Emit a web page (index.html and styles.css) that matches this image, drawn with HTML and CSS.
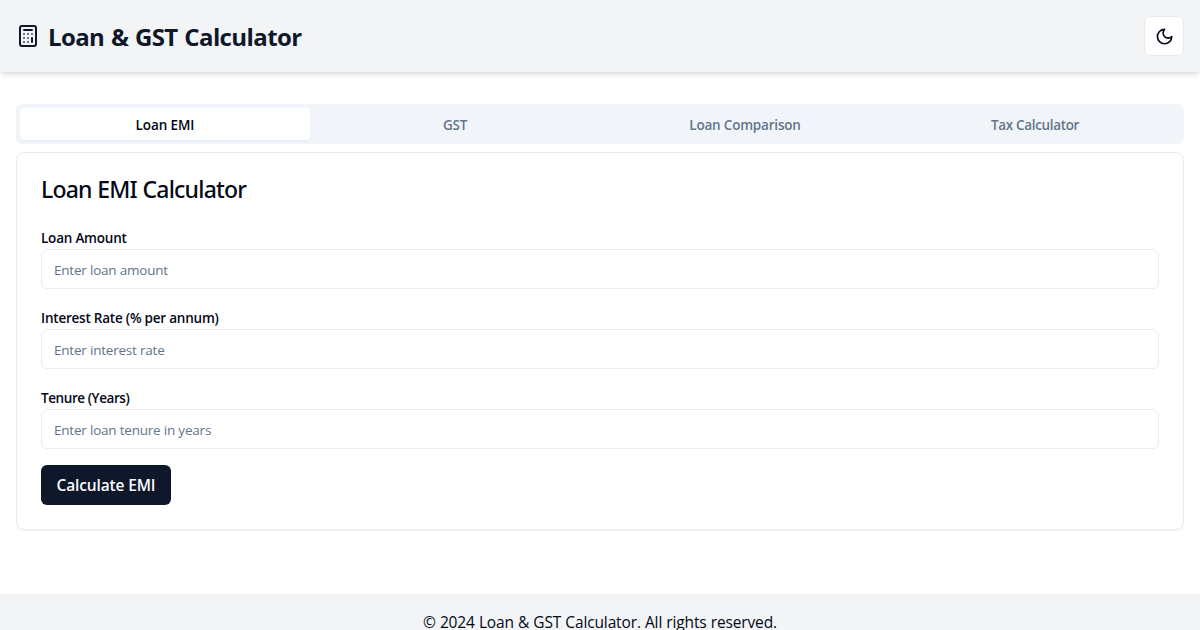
FILE: index.html
```html
<!DOCTYPE html>
<html lang="en">
<head>
<meta charset="utf-8">
<title>Loan &amp; GST Calculator</title>
<link rel="stylesheet" href="styles.css">
</head>
<body>
<header class="header">
  <div class="brand">
    <svg class="brand-icon" viewBox="0 0 24 24"><rect width="16" height="20" x="4" y="2" rx="2"/><path d="M8 6h8M16 14v4"/><path class="keys" d="M16 10h.01M12 10h.01M8 10h.01M12 14h.01M8 14h.01M12 18h.01M8 18h.01"/></svg>
    <h1 class="brand-title">Loan &amp; GST Calculator</h1>
  </div>
  <button class="theme-toggle" aria-label="Toggle theme"><svg class="moon" viewBox="0 0 24 24"><path d="M12 3a6 6 0 0 0 9 9 9 9 0 1 1-9-9Z"/></svg></button>
</header>
<main class="main">
  <div class="tabs">
    <button class="tab tab-active"><span class="tab-text">Loan EMI</span></button>
    <button class="tab"><span class="tab-text">GST</span></button>
    <button class="tab"><span class="tab-text">Loan Comparison</span></button>
    <button class="tab"><span class="tab-text tab-text-tight">Tax Calculator</span></button>
  </div>
  <section class="card">
    <h2 class="card-title">Loan EMI Calculator</h2>
    <form class="form">
      <div class="field"><label class="label" for="amount">Loan Amount</label><input class="input" id="amount" placeholder="Enter loan amount"></div>
      <div class="field"><label class="label" for="rate">Interest Rate (% per annum)</label><input class="input" id="rate" placeholder="Enter interest rate"></div>
      <div class="field"><label class="label label-tight" for="tenure">Tenure (Years)</label><input class="input" id="tenure" placeholder="Enter loan tenure in years"></div>
      <button class="submit" type="button">Calculate EMI</button>
    </form>
  </section>
</main>
<footer class="footer"><p class="copyright">© 2024 Loan &amp; GST Calculator. All rights reserved.</p></footer>
</body>
</html>
```
FILE: styles.css
```css
* { box-sizing: border-box; margin: 0; }
body { height: 630px; overflow: hidden; background: #fff; color: #020817; font-family: "Open Sans", "Noto Sans", sans-serif; font-size: 16px; line-height: 24px; }
button, input { font: inherit; }
svg { fill: none; stroke: currentColor; stroke-width: 2; stroke-linecap: round; stroke-linejoin: round; }
.header { display: flex; align-items: center; justify-content: space-between; height: 72px; padding: 16px; background: #f3f4f6; color: #0f172a; box-shadow: 0 4px 6px -1px rgba(0,0,0,.1), 0 2px 4px -2px rgba(0,0,0,.1); }
.brand { display: flex; align-items: center; gap: 8px; }
.brand-icon { width: 24px; height: 24px; }
.keys { stroke-opacity: .75; }
.brand-title { padding-top: 2px; font-size: 24px; line-height: 32px; font-weight: 700; letter-spacing: -.6px; word-spacing: 1px; }
.theme-toggle { display: flex; align-items: center; justify-content: center; width: 40px; height: 40px; padding: 1px 0 0 1px; border: 1px solid #e7ecf4; border-radius: 6px; background: #fff; color: #020817; }
.moon { width: 19.2px; height: 19.2px; }
.main { padding: 32px 16px; }
.tabs { display: grid; grid-template-columns: repeat(4, 1fr); height: 40px; padding: 4px; border-radius: 6px; background: #f1f5f9; }
.tab { height: 32px; padding: 2px 0 0; border: 0; border-radius: 4px; background: transparent; color: #64748b; font-size: 13.5px; line-height: 20px; font-weight: 600; letter-spacing: -.2px; }
.tab-active { background: #fff; color: #020817; letter-spacing: -.1px; box-shadow: 0 1px 2px rgba(0,0,0,.05); }
.tab-text-tight { letter-spacing: -.33px; }
.card { height: 378px; margin-top: 8px; padding: 24px; border: 1px solid #e7ebf3; border-radius: 8px; box-shadow: 0 1px 2px rgba(0,0,0,.05); }
.card-title { font-family: "Noto Sans", sans-serif; font-size: 23px; line-height: 24px; font-weight: 500; letter-spacing: -.8px; word-spacing: .4px; }
.form { display: grid; gap: 16px; justify-items: start; margin-top: 24px; }
.field { width: 100%; height: 64px; }
.label { display: block; height: 24px; padding-top: 1px; font-size: 13.5px; line-height: 24px; font-weight: 600; letter-spacing: -.22px; }
.label-tight { letter-spacing: -.42px; }
.input { display: block; width: 100%; height: 40px; padding: 9px 12px 7px; border: 1px solid #e9edf5; border-radius: 6px; background: #fff; font-size: 13.5px; line-height: 20px; letter-spacing: -.21px; }
.input::placeholder { color: #64748b; opacity: 1; }
.submit { width: 130px; height: 40px; padding: 0; border: 0; border-radius: 6px; background: #0f172a; color: #f8fafc; font-size: 15.5px; font-weight: 600; letter-spacing: -.15px; }
.footer { height: 56px; margin-top: 32px; padding: 16px; background: #f3f4f6; text-align: center; }
.copyright { font-size: 15.5px; letter-spacing: -.13px; word-spacing: .2px; }
```
